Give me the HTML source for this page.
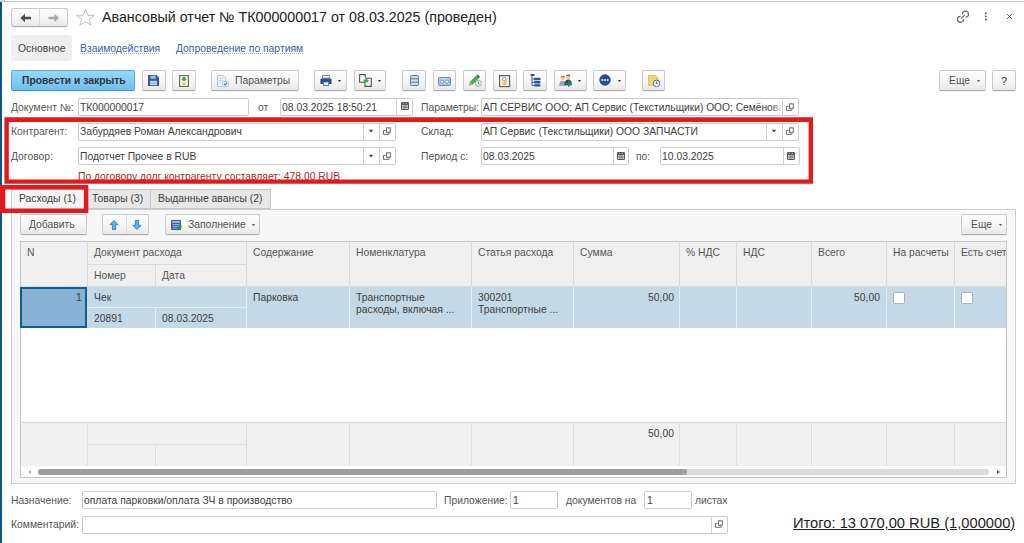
<!DOCTYPE html>
<html><head><meta charset="utf-8">
<style>
*{box-sizing:border-box;margin:0;padding:0}
html,body{width:1024px;height:543px;overflow:hidden;background:#fff;font-family:"Liberation Sans",sans-serif;position:relative}
.a{position:absolute}
.cb{position:absolute;border:1px solid #b0b0b0;border-radius:1.5px;background:#fff}
.t{position:absolute;white-space:nowrap;font-size:10.35px;line-height:12px;color:#3d3d3d}
.lb{color:#555}
.fld{position:absolute;border:1px solid #cbcbcb;border-radius:2px;background:#fff;height:18px}
.btn{position:absolute;border:1px solid #c9c9c9;border-bottom-color:#a9a9a9;border-radius:2px;background:linear-gradient(#fefefe,#f6f6f6 50%,#e9e9e9);box-shadow:0 1px 0 rgba(0,0,0,.05);height:21px}
.vs{position:absolute;top:0;bottom:0;width:1px;background:#d2d2d2}
.dd{position:absolute;width:0;height:0;border-left:3px solid transparent;border-right:3px solid transparent;border-top:3px solid #444}
.lnk{color:#3a5bb5;text-decoration:underline dotted;text-decoration-color:#9fb0dc}
.red{position:absolute;border:4px solid #e31a1c}
svg{position:absolute;overflow:visible}
</style></head><body>
<!-- top line and left bar -->
<div class="a" style="left:0;top:1px;width:1024px;height:1px;background:#c3c3c3"></div>
<div class="a" style="left:0;top:0;width:4px;height:1px;background:#e6e6e6"></div>
<div class="a" style="left:4px;top:0;width:1px;height:2px;background:#b0b0b0"></div>
<div class="a" style="left:0;top:2px;width:2px;height:541px;background:#0b5589"></div>

<!-- nav buttons -->
<div class="btn" style="left:11px;top:8px;width:57px;height:19px;border-radius:3px"></div>
<div class="a" style="left:39px;top:9px;width:1px;height:17px;background:#d8d8d8"></div>
<svg style="left:20px;top:13px" width="12" height="10" viewBox="0 0 12 10"><path d="M0.5 5 L5 0.8 L5 3.7 L11 3.7 L11 6.3 L5 6.3 L5 9.2 Z" fill="#4a4a4a"/></svg>
<svg style="left:48px;top:13px" width="12" height="10" viewBox="0 0 12 10"><path d="M11 5 L6.5 0.8 L6.5 3.7 L0.5 3.7 L0.5 6.3 L6.5 6.3 L6.5 9.2 Z" fill="#a8a8a8"/></svg>
<!-- star -->
<svg style="left:76px;top:8px" width="20" height="18" viewBox="0 0 20 18"><path d="M9.4 1 L11.6 7.3 L18.3 7.4 L13 11.5 L15 17.2 L9.4 13.7 L3.8 17.2 L5.8 11.5 L0.5 7.4 L7.2 7.3 Z" fill="none" stroke="#b9c1c9" stroke-width="1"/></svg>
<!-- title -->
<div class="t" style="left:102px;top:9px;font-size:14.27px;line-height:16px;color:#222">Авансовый отчет № ТК000000017 от 08.03.2025 (проведен)</div>
<!-- right icons -->
<svg style="left:952px;top:6px" width="20" height="20" viewBox="0 0 20 20"><g fill="none" stroke="#6a6a6a" stroke-width="1.2" stroke-linecap="round"><path d="M13.76 11.19 A3 3 0 1 0 10.51 7.94"/><path d="M11.39 13.56 A3 3 0 1 1 8.14 10.31"/><path d="M9.4 12.3 L12.5 9.2"/></g></svg>
<svg style="left:980px;top:8px" width="12" height="16" viewBox="0 0 12 16"><g fill="#585858"><circle cx="5.8" cy="5.2" r="0.95"/><circle cx="5.8" cy="8.4" r="0.95"/><circle cx="5.8" cy="11.5" r="0.95"/></g></svg>
<svg style="left:1006px;top:13px" width="7" height="7" viewBox="0 0 7 7"><path d="M0.9 0.9 L6.1 6.1 M6.1 0.9 L0.9 6.1" stroke="#666" stroke-width="1"/></svg>

<!-- section tabs -->
<div class="a" style="left:11px;top:35px;width:61px;height:26px;background:#efefef;border-radius:3px"></div>
<div class="t" style="left:18px;top:43px">Основное</div>
<div class="t lnk" style="left:80px;top:43px">Взаимодействия</div>
<div class="t lnk" style="left:176px;top:43px">Допроведение по партиям</div>

<!-- toolbar -->
<div class="btn" style="left:11px;top:70px;width:124px;border-color:#5aa6da;border-bottom-color:#4a90c0;background:linear-gradient(#98d8fd,#6cc0f1)"></div>
<div class="t" style="left:22px;top:75px;font-weight:bold;color:#333">Провести и закрыть</div>
<div class="btn" style="left:142px;top:70px;width:24px"></div>
<svg style="left:148px;top:75px" width="11" height="11" viewBox="0 0 11 11"><path d="M0 0 H8.5 L11 2.5 V11 H0 Z" fill="#2f56a0"/><rect x="2.3" y="0.6" width="5.5" height="3.2" fill="#9fb6dc"/><rect x="2" y="5.8" width="7" height="4.4" fill="#c9d3e2"/><rect x="2" y="7.6" width="7" height="0.8" fill="#8aa0c0"/></svg>
<div class="btn" style="left:172px;top:70px;width:24px"></div>
<svg style="left:179px;top:75px" width="10" height="12" viewBox="0 0 10 12"><rect x="0.6" y="0.6" width="8.8" height="10.8" fill="#fff" stroke="#6a6a6a" stroke-width="1.2"/><path d="M3.5 2 H6.5 V4 H8 L5 6.5 L2 4 H3.5 Z" fill="#2bb24c"/><circle cx="5" cy="8.6" r="1.7" fill="#f5c518"/></svg>
<div class="btn" style="left:211px;top:70px;width:88px"></div>
<svg style="left:217px;top:75px" width="12" height="12" viewBox="0 0 12 12"><path d="M0.5 0.5 H6 L8.5 3 V11.5 H0.5 Z" fill="#eef3f8" stroke="#b3c7da" stroke-width="1"/><path d="M2 3.5 H6 M2 5.5 H6 M2 7.5 H4" stroke="#b5c6d8" stroke-width="0.8"/><rect x="5.5" y="6.5" width="6" height="5" rx="1" fill="#f4f8fc" stroke="#a9c6e2" stroke-width="1"/><path d="M7 9 L8.2 10 L10.2 7.8" stroke="#3a78b8" stroke-width="1.1" fill="none"/></svg>
<div class="t" style="left:235px;top:75px;color:#505050">Параметры</div>
<div class="btn" style="left:314px;top:70px;width:33px"></div>
<svg style="left:320px;top:75px" width="12" height="11" viewBox="0 0 12 11"><rect x="2.5" y="0.5" width="6.8" height="2.6" fill="#fff" stroke="#777" stroke-width="0.9"/><path d="M1.2 3.6 H10.8 Q11.6 3.6 11.6 4.6 V9 H9 V10.8 H3 V9 H0.4 V4.6 Q0.4 3.6 1.2 3.6 Z" fill="#2a4f9a"/><rect x="3.6" y="7.3" width="4.8" height="2.6" fill="#fff"/></svg>
<svg style="left:337px;top:79px" width="5" height="3" viewBox="0 0 5 3"><path d="M0.9 0.9 H4.1 L2.5 2.9 Z" fill="#333"/></svg>
<div class="btn" style="left:354px;top:70px;width:32px"></div>
<svg style="left:359px;top:74px" width="14" height="13" viewBox="0 0 14 13"><path d="M6.5 8.2 H0.6 V0.6 H6.2 V3.8" fill="none" stroke="#555" stroke-width="1.1"/><path d="M6 4.3 H12.3 V12.4 H6 V8.6" fill="none" stroke="#555" stroke-width="1.1"/><path d="M4.6 5.6 H7.2 V4.3 L10 6.7 L7.2 9.1 V7.8 H4.6 Z" fill="#22b24a"/></svg>
<svg style="left:377px;top:79px" width="5" height="3" viewBox="0 0 5 3"><path d="M0.9 0.9 H4.1 L2.5 2.9 Z" fill="#333"/></svg>
<div class="btn" style="left:402px;top:70px;width:24px"></div>
<svg style="left:410px;top:75px" width="9" height="11" viewBox="0 0 9 11"><rect x="0.5" y="0.5" width="8" height="10" rx="1" fill="#b9cde0" stroke="#5f7f9f" stroke-width="1"/><path d="M0.5 3.8 H8.5 M0.5 7.2 H8.5" stroke="#5f7f9f" stroke-width="0.9"/><path d="M1.5 2 H7.5 M1.5 5.4 H7.5 M1.5 8.8 H7.5" stroke="#e4edf5" stroke-width="0.9"/></svg>
<div class="btn" style="left:433px;top:70px;width:23px"></div>
<svg style="left:438px;top:77px" width="13" height="9" viewBox="0 0 13 9"><rect x="0.5" y="0.5" width="12" height="8" rx="1" fill="#a9c8e6" stroke="#6b8aa8" stroke-width="1"/><circle cx="4" cy="4.6" r="1.6" fill="#fff" stroke="#6b8aa8" stroke-width="0.8"/><circle cx="9" cy="4.6" r="1.6" fill="#fff" stroke="#6b8aa8" stroke-width="0.8"/><path d="M3 1.8 H10" stroke="#d8e6f2" stroke-width="0.8"/></svg>
<div class="btn" style="left:463px;top:70px;width:23px"></div>
<svg style="left:468px;top:74px" width="14" height="13" viewBox="0 0 14 13"><path d="M1.2 11.2 L2.2 8 L8.5 1.7 L10.8 4 L4.5 10.3 Z" fill="#3fb548" stroke="#2a7a2f" stroke-width="0.5"/><path d="M8.5 1.7 L9.7 0.5 L12 2.8 L10.8 4 Z" fill="#555"/><path d="M1.2 11.2 L2.2 8 L4.5 10.3 Z" fill="#e0b070"/><circle cx="10.3" cy="9.3" r="3" fill="#fff" stroke="#7c98b4" stroke-width="0.9"/><path d="M10.2 7.5 V9.4 L11.4 10.3" stroke="#333" stroke-width="0.8" fill="none"/></svg>
<div class="btn" style="left:493px;top:70px;width:24px"></div>
<svg style="left:499px;top:75px" width="12" height="12" viewBox="0 0 12 12"><rect x="0.6" y="0.6" width="10" height="11" fill="#f4f4f4" stroke="#666" stroke-width="1.2"/><circle cx="5.2" cy="4" r="1.7" fill="none" stroke="#888" stroke-width="0.8"/><path d="M6.4 5.2 L8 6.6" stroke="#888" stroke-width="0.8"/><circle cx="5.6" cy="8.2" r="2" fill="#f7c81e"/></svg>
<div class="btn" style="left:523px;top:70px;width:24px"></div>
<svg style="left:530px;top:74px" width="11" height="13" viewBox="0 0 11 13"><rect x="0.5" y="0" width="4" height="2" rx="0.6" fill="#2a53a0"/><path d="M2 2 V11.5 M2 5 H4 M2 8.2 H4 M2 11.4 H4" stroke="#2a53a0" stroke-width="0.9"/><rect x="4" y="3.8" width="6.5" height="2.4" rx="0.8" fill="#2a53a0"/><rect x="4" y="7" width="6.5" height="2.4" rx="0.8" fill="#2a53a0"/><rect x="4" y="10.2" width="6.5" height="2.4" rx="0.8" fill="#2a53a0"/></svg>
<div class="btn" style="left:554px;top:70px;width:33px"></div>
<svg style="left:559px;top:74px" width="14" height="13" viewBox="0 0 14 13"><path d="M0.2 11.8 Q0.2 6.8 3.9 6.8 Q7.4 6.8 7.4 11.8 Z" fill="#7ea3c4"/><rect x="3.5" y="7.2" width="0.9" height="4.4" fill="#e2a0a0"/><circle cx="3.9" cy="4" r="2.1" fill="#eec47c"/><path d="M1.8 3.6 Q2 1.6 3.9 1.7 Q5.8 1.6 6 3.6 Q5 2.6 3.9 2.7 Q2.8 2.6 1.8 3.6 Z" fill="#8a5a20"/><path d="M5.6 11.2 Q5.6 5.6 9.2 5.6 Q12.8 5.6 12.8 11.2 Z" fill="#2e3f78"/><circle cx="9.2" cy="2.7" r="2.1" fill="#eec47c"/><path d="M7.1 2.4 Q7.2 0.3 9.2 0.4 Q11.2 0.3 11.3 2.4 Q10.3 1.4 9.2 1.5 Q8.1 1.4 7.1 2.4 Z" fill="#34365c"/><path d="M6.8 9 H12.8 V10.6 H6.8 Z M9 6.8 H10.6 V12.8 H9 Z" fill="#0f9a48"/></svg>
<svg style="left:577px;top:79px" width="5" height="3" viewBox="0 0 5 3"><path d="M0.9 0.9 H4.1 L2.5 2.9 Z" fill="#333"/></svg>
<div class="btn" style="left:593px;top:70px;width:33px"></div>
<svg style="left:599px;top:74px" width="12" height="12" viewBox="0 0 12 12"><circle cx="6" cy="6" r="5.7" fill="#2a4e96"/><circle cx="3.3" cy="6" r="0.95" fill="#fff"/><circle cx="6" cy="6" r="0.95" fill="#fff"/><circle cx="8.7" cy="6" r="0.95" fill="#fff"/></svg>
<svg style="left:617px;top:79px" width="5" height="3" viewBox="0 0 5 3"><path d="M0.9 0.9 H4.1 L2.5 2.9 Z" fill="#333"/></svg>
<div class="btn" style="left:642px;top:70px;width:23px"></div>
<svg style="left:648px;top:75px" width="13" height="12" viewBox="0 0 13 12"><path d="M0.5 0.5 H7.5 L10 3 V10.5 H0.5 Z" fill="#f1d37a" stroke="#d9b54e" stroke-width="0.8"/><circle cx="8.5" cy="8.4" r="3.3" fill="#fff" stroke="#3f6fb0" stroke-width="1"/><path d="M8.5 6.6 V8.6 H10" stroke="#d63030" stroke-width="0.9" fill="none"/></svg>
<div class="btn" style="left:939px;top:70px;width:47px"></div>
<div class="t" style="left:949px;top:75px;color:#505050">Еще</div>
<svg style="left:976px;top:79px" width="5" height="3" viewBox="0 0 5 3"><path d="M0.9 0.9 H4.1 L2.5 2.9 Z" fill="#555"/></svg>
<div class="btn" style="left:992px;top:70px;width:24px"></div>
<div class="t" style="left:1001px;top:75px;color:#333;font-size:11px">?</div>

<!-- header fields -->
<div class="t lb" style="left:11px;top:102px">Документ №:</div>
<div class="fld" style="left:78px;top:98px;width:171px"></div>
<div class="t" style="left:80px;top:102px">ТК000000017</div>
<div class="t lb" style="left:258px;top:102px">от</div>
<div class="fld" style="left:280px;top:98px;width:133px"><div class="vs" style="left:115px"></div></div>
<div class="t" style="left:282px;top:102px">08.03.2025 18:50:21</div>
<svg style="left:401px;top:102px" width="8" height="8" viewBox="0 0 8 8"><rect x="0" y="0" width="8" height="7.9" rx="1.2" fill="#595959"/><circle cx="2.6" cy="1.3" r="0.65" fill="#bbb"/><circle cx="5.4" cy="1.3" r="0.65" fill="#bbb"/><rect x="1" y="3" width="6" height="4" fill="#d6d6d6"/><path d="M3 3 V7 M5 3 V7 M1 5 H7" stroke="#595959" stroke-width="0.7"/></svg>
<div class="t lb" style="left:421px;top:102px">Параметры:</div>
<div class="fld" style="left:481px;top:98px;width:318px"><div class="vs" style="left:300px"></div></div>
<div class="a" style="left:482px;top:99px;width:300px;height:16px;overflow:hidden"><div class="t" style="left:1px;top:3px;font-size:10.22px">АП СЕРВИС ООО; АП Сервис (Текстильщики) ООО; Семёнова</div><div class="a" style="left:290px;top:0;width:10px;height:16px;background:linear-gradient(to right,rgba(255,255,255,0),#fff)"></div></div>
<svg style="left:785px;top:103px" width="10" height="9" viewBox="0 0 10 9"><path d="M3.6 3.4 H1.45 V7.3 H6.9 V5.8" fill="none" stroke="#666" stroke-width="1"/><rect x="4.55" y="0.85" width="3.75" height="4.4" fill="none" stroke="#666" stroke-width="1"/></svg>

<div class="t lb" style="left:11px;top:126px">Контрагент:</div>
<div class="fld" style="left:78px;top:123px;width:318px"><div class="vs" style="left:284px"></div><div class="vs" style="left:300px"></div></div>
<div class="t" style="left:80px;top:126px">Забурдяев Роман Александрович</div>
<svg style="left:368px;top:129px" width="6" height="4" viewBox="0 0 6 4"><path d="M0.8 0.8 H5.2 L3 3.5 Z" fill="#444"/></svg>
<svg style="left:382px;top:127px" width="10" height="9" viewBox="0 0 10 9"><path d="M3.6 3.4 H1.45 V7.3 H6.9 V5.8" fill="none" stroke="#666" stroke-width="1"/><rect x="4.55" y="0.85" width="3.75" height="4.4" fill="none" stroke="#666" stroke-width="1"/></svg>
<div class="t lb" style="left:421px;top:126px">Склад:</div>
<div class="fld" style="left:481px;top:123px;width:318px"><div class="vs" style="left:284px"></div><div class="vs" style="left:300px"></div></div>
<div class="t" style="left:483px;top:126px">АП Сервис (Текстильщики) ООО ЗАПЧАСТИ</div>
<svg style="left:771px;top:129px" width="6" height="4" viewBox="0 0 6 4"><path d="M0.8 0.8 H5.2 L3 3.5 Z" fill="#444"/></svg>
<svg style="left:785px;top:127px" width="10" height="9" viewBox="0 0 10 9"><path d="M3.6 3.4 H1.45 V7.3 H6.9 V5.8" fill="none" stroke="#666" stroke-width="1"/><rect x="4.55" y="0.85" width="3.75" height="4.4" fill="none" stroke="#666" stroke-width="1"/></svg>

<div class="t lb" style="left:11px;top:151px">Договор:</div>
<div class="fld" style="left:78px;top:147px;width:318px"><div class="vs" style="left:284px"></div><div class="vs" style="left:300px"></div></div>
<div class="t" style="left:80px;top:151px">Подотчет Прочее в RUB</div>
<svg style="left:368px;top:154px" width="6" height="4" viewBox="0 0 6 4"><path d="M0.8 0.8 H5.2 L3 3.5 Z" fill="#444"/></svg>
<svg style="left:382px;top:152px" width="10" height="9" viewBox="0 0 10 9"><path d="M3.6 3.4 H1.45 V7.3 H6.9 V5.8" fill="none" stroke="#666" stroke-width="1"/><rect x="4.55" y="0.85" width="3.75" height="4.4" fill="none" stroke="#666" stroke-width="1"/></svg>
<div class="t lb" style="left:421px;top:151px">Период с:</div>
<div class="fld" style="left:481px;top:147px;width:148px"><div class="vs" style="left:131px"></div></div>
<div class="t" style="left:483px;top:151px">08.03.2025</div>
<svg style="left:617px;top:152px" width="8" height="8" viewBox="0 0 8 8"><rect x="0" y="0" width="8" height="7.9" rx="1.2" fill="#595959"/><circle cx="2.6" cy="1.3" r="0.65" fill="#bbb"/><circle cx="5.4" cy="1.3" r="0.65" fill="#bbb"/><rect x="1" y="3" width="6" height="4" fill="#d6d6d6"/><path d="M3 3 V7 M5 3 V7 M1 5 H7" stroke="#595959" stroke-width="0.7"/></svg>
<div class="t lb" style="left:636px;top:151px">по:</div>
<div class="fld" style="left:660px;top:147px;width:140px"><div class="vs" style="left:122px"></div></div>
<div class="t" style="left:662px;top:151px">10.03.2025</div>
<svg style="left:787px;top:152px" width="8" height="8" viewBox="0 0 8 8"><rect x="0" y="0" width="8" height="7.9" rx="1.2" fill="#595959"/><circle cx="2.6" cy="1.3" r="0.65" fill="#bbb"/><circle cx="5.4" cy="1.3" r="0.65" fill="#bbb"/><rect x="1" y="3" width="6" height="4" fill="#d6d6d6"/><path d="M3 3 V7 M5 3 V7 M1 5 H7" stroke="#595959" stroke-width="0.7"/></svg>
<div class="t" style="left:78px;top:171px;color:#a52a2a;text-decoration:underline">По договору долг контрагенту составляет: 478,00 RUB</div>

<svg style="left:0;top:0" width="1024" height="543"><path fill-rule="evenodd" fill="#e31a1c" d="M4.4 117.2 H813 V183.7 H4.4 Z M8.8 121.9 V179.5 H808.6 V121.9 Z"/></svg>

<!-- tabs panel -->
<div class="a" style="left:11px;top:209px;width:1005px;height:275px;border:1px solid #cdcdcd;background:#f7f7f7"></div>
<div class="a" style="left:11px;top:189px;width:75px;height:21px;border:1px solid #cdcdcd;border-bottom:none;background:#f4f4f4"></div>
<div class="t" style="left:19px;top:193px">Расходы (1)</div>
<div class="a" style="left:85px;top:189px;width:66px;height:20px;border:1px solid #c6c6c6;background:#e7e7e7"></div>
<div class="t" style="left:92px;top:193px">Товары (3)</div>
<div class="a" style="left:150px;top:189px;width:121px;height:20px;border:1px solid #c6c6c6;background:#e7e7e7"></div>
<div class="t" style="left:158px;top:193px">Выданные авансы (2)</div>
<svg style="left:0;top:0" width="1024" height="543"><path fill-rule="evenodd" fill="#e31a1c" d="M0 184.9 H88.3 V213 H0 Z M5.3 189.5 V208.5 H83.9 V189.5 Z"/></svg>

<!-- tab toolbar -->
<div class="btn" style="left:20px;top:214px;width:67px"></div>
<div class="t" style="left:29px;top:219px;color:#505050">Добавить</div>
<div class="btn" style="left:102px;top:214px;width:47px"><div class="vs" style="left:23px;background:#dcdcdc"></div></div>
<svg style="left:109px;top:220px" width="10" height="10" viewBox="0 0 10 10"><path d="M5 0.5 L9.2 4.6 H6.6 V9.5 H3.4 V4.6 H0.8 Z" fill="#4db8f2" stroke="#1f78c0" stroke-width="0.8" stroke-linejoin="round"/></svg>
<svg style="left:132px;top:220px" width="10" height="10" viewBox="0 0 10 10"><path d="M5 9.5 L9.2 5.4 H6.6 V0.5 H3.4 V5.4 H0.8 Z" fill="#4db8f2" stroke="#1f78c0" stroke-width="0.8" stroke-linejoin="round"/></svg>
<div class="btn" style="left:165px;top:214px;width:95px"></div>
<svg style="left:171px;top:220px" width="12" height="11" viewBox="0 0 12 11"><rect x="0" y="0" width="10" height="10" rx="0.8" fill="#3d5aa8"/><rect x="1.2" y="1.2" width="7.6" height="1.6" fill="#b8c6e6"/><path d="M1.5 4.6 H8.5 M1.5 6.4 H8.5 M1.5 8.2 H6" stroke="#c8d3ec" stroke-width="0.7"/><path d="M5.6 10.6 L6.3 8.6 L9.6 5.3 L11 6.7 L7.7 10 Z" fill="#1f9a2f"/><path d="M9.6 5.3 L10.4 4.5 L11.8 5.9 L11 6.7 Z" fill="#f3d34a"/></svg>
<div class="t" style="left:188px;top:219px;color:#505050">Заполнение</div>
<svg style="left:251px;top:223px" width="5" height="3" viewBox="0 0 5 3"><path d="M0.9 0.9 H4.1 L2.5 2.9 Z" fill="#555"/></svg>
<div class="btn" style="left:961px;top:214px;width:46px"></div>
<div class="t" style="left:971px;top:219px;color:#505050">Еще</div>
<svg style="left:998px;top:223px" width="5" height="3" viewBox="0 0 5 3"><path d="M0.9 0.9 H4.1 L2.5 2.9 Z" fill="#555"/></svg>

<!-- table -->
<div class="a" style="left:20px;top:241px;width:987px;height:237px;border:1px solid #c6c6c6;background:#fff"></div>
<!-- header -->
<div class="a" style="left:21px;top:242px;width:985px;height:45px;background:#f0f0f0"></div>
<div class="a" style="left:21px;top:286px;width:985px;height:1px;background:#dadada"></div>
<div class="a" style="left:87px;top:242px;width:1px;height:45px;background:#dadada"></div>
<div class="a" style="left:246px;top:242px;width:1px;height:45px;background:#dadada"></div>
<div class="a" style="left:349px;top:242px;width:1px;height:45px;background:#dadada"></div>
<div class="a" style="left:471px;top:242px;width:1px;height:45px;background:#dadada"></div>
<div class="a" style="left:573px;top:242px;width:1px;height:45px;background:#dadada"></div>
<div class="a" style="left:679px;top:242px;width:1px;height:45px;background:#dadada"></div>
<div class="a" style="left:736px;top:242px;width:1px;height:45px;background:#dadada"></div>
<div class="a" style="left:811px;top:242px;width:1px;height:45px;background:#dadada"></div>
<div class="a" style="left:886px;top:242px;width:1px;height:45px;background:#dadada"></div>
<div class="a" style="left:954px;top:242px;width:1px;height:45px;background:#dadada"></div>
<div class="a" style="left:87px;top:264px;width:159px;height:1px;background:#dadada"></div>
<div class="a" style="left:155px;top:264px;width:1px;height:23px;background:#dadada"></div>
<div class="a" style="left:21px;top:242px;width:985px;height:45px;overflow:hidden">
<div class="t hc" style="left:6px;top:5px;color:#555">N</div>
<div class="t hc" style="left:73px;top:5px;color:#555">Документ расхода</div>
<div class="t hc" style="left:73px;top:28px;color:#555">Номер</div>
<div class="t hc" style="left:141px;top:28px;color:#555">Дата</div>
<div class="t hc" style="left:232px;top:5px;color:#555">Содержание</div>
<div class="t hc" style="left:335px;top:5px;color:#555">Номенклатура</div>
<div class="t hc" style="left:457px;top:5px;color:#555">Статья расхода</div>
<div class="t hc" style="left:559px;top:5px;color:#555">Сумма</div>
<div class="t hc" style="left:665px;top:5px;color:#555">% НДС</div>
<div class="t hc" style="left:722px;top:5px;color:#555">НДС</div>
<div class="t hc" style="left:797px;top:5px;color:#555">Всего</div>
<div class="t hc" style="left:872px;top:5px;color:#555">На расчеты</div>
<div class="t hc" style="left:940px;top:5px;color:#555">Есть счет</div>
</div>
<!-- row -->
<div class="a" style="left:21px;top:287px;width:985px;height:41px;background:#c3d9e8"></div>
<div class="a" style="left:246px;top:287px;width:1px;height:41px;background:#e4eef5"></div>
<div class="a" style="left:349px;top:287px;width:1px;height:41px;background:#e4eef5"></div>
<div class="a" style="left:471px;top:287px;width:1px;height:41px;background:#e4eef5"></div>
<div class="a" style="left:573px;top:287px;width:1px;height:41px;background:#e4eef5"></div>
<div class="a" style="left:679px;top:287px;width:1px;height:41px;background:#e4eef5"></div>
<div class="a" style="left:736px;top:287px;width:1px;height:41px;background:#e4eef5"></div>
<div class="a" style="left:811px;top:287px;width:1px;height:41px;background:#e4eef5"></div>
<div class="a" style="left:886px;top:287px;width:1px;height:41px;background:#e4eef5"></div>
<div class="a" style="left:954px;top:287px;width:1px;height:41px;background:#e4eef5"></div>
<div class="a" style="left:87px;top:307px;width:159px;height:1px;background:#e4eef5"></div>
<div class="a" style="left:155px;top:307px;width:1px;height:21px;background:#e4eef5"></div>
<div class="a" style="left:20px;top:287px;width:67px;height:41px;border:2px solid #145d93;background:#86b3d3"></div>
<div class="a" style="left:21px;top:287px;width:985px;height:41px;overflow:hidden">
<div class="t" style="left:55px;top:5px">1</div>
<div class="t" style="left:73px;top:5px">Чек</div>
<div class="t" style="left:73px;top:26px">20891</div>
<div class="t" style="left:141px;top:26px">08.03.2025</div>
<div class="t" style="left:232px;top:5px">Парковка</div>
<div class="t" style="left:335px;top:5px;line-height:12px">Транспортные<br>расходы, включая ...</div>
<div class="t" style="left:457px;top:5px;line-height:12px">300201<br>Транспортные ...</div>
<div class="t" style="left:627px;top:5px">50,00</div>
<div class="t" style="left:833px;top:5px">50,00</div>
<div class="cb" style="left:872px;top:5px;width:12px;height:12px"></div>
<div class="cb" style="left:940px;top:5px;width:12px;height:12px"></div>
</div>
<!-- footer -->
<div class="a" style="left:21px;top:422px;width:985px;height:44px;background:#f0f0f0;border-top:1px solid #d6d6d6"></div>
<div class="a" style="left:87px;top:423px;width:1px;height:43px;background:#dedede"></div>
<div class="a" style="left:246px;top:423px;width:1px;height:43px;background:#dedede"></div>
<div class="a" style="left:349px;top:423px;width:1px;height:43px;background:#dedede"></div>
<div class="a" style="left:471px;top:423px;width:1px;height:43px;background:#dedede"></div>
<div class="a" style="left:573px;top:423px;width:1px;height:43px;background:#dedede"></div>
<div class="a" style="left:679px;top:423px;width:1px;height:43px;background:#dedede"></div>
<div class="a" style="left:736px;top:423px;width:1px;height:43px;background:#dedede"></div>
<div class="a" style="left:811px;top:423px;width:1px;height:43px;background:#dedede"></div>
<div class="a" style="left:886px;top:423px;width:1px;height:43px;background:#dedede"></div>
<div class="a" style="left:954px;top:423px;width:1px;height:43px;background:#dedede"></div>
<div class="a" style="left:87px;top:444px;width:159px;height:1px;background:#dedede"></div>
<div class="a" style="left:155px;top:444px;width:1px;height:22px;background:#dedede"></div>
<div class="t" style="left:648px;top:428px">50,00</div>
<!-- scrollbar -->
<div class="a" style="left:38px;top:469px;width:951px;height:6px;border-radius:3px;background:#dcdcdc"></div>
<div class="a" style="left:38px;top:469px;width:649px;height:6px;border-radius:3px;background:#9d9d9d"></div>
<svg style="left:28px;top:470px" width="3" height="4" viewBox="0 0 3 4"><path d="M0 2 L3 0 V4 Z" fill="#b0b0b0"/></svg>
<svg style="left:997px;top:470px" width="3" height="4" viewBox="0 0 3 4"><path d="M3 2 L0 0 V4 Z" fill="#555"/></svg>

<!-- bottom fields -->
<div class="t lb" style="left:11px;top:495px">Назначение:</div>
<div class="fld" style="left:82px;top:491px;width:355px"></div>
<div class="t" style="left:84px;top:495px">оплата парковки/оплата ЗЧ в производство</div>
<div class="t lb" style="left:444px;top:495px">Приложение:</div>
<div class="fld" style="left:510px;top:491px;width:48px"></div>
<div class="t" style="left:513px;top:495px">1</div>
<div class="t lb" style="left:566px;top:495px">документов на</div>
<div class="fld" style="left:644px;top:491px;width:48px"></div>
<div class="t" style="left:647px;top:495px">1</div>
<div class="t lb" style="left:695px;top:495px">листах</div>
<div class="t lb" style="left:11px;top:519px">Комментарий:</div>
<div class="fld" style="left:82px;top:516px;width:646px"><div class="vs" style="left:628px"></div></div>
<svg style="left:714px;top:520px" width="10" height="9" viewBox="0 0 10 9"><path d="M3.6 3.4 H1.45 V7.3 H6.9 V5.8" fill="none" stroke="#666" stroke-width="1"/><rect x="4.55" y="0.85" width="3.75" height="4.4" fill="none" stroke="#666" stroke-width="1"/></svg>
<div class="t" style="left:793px;top:515px;font-size:14.7px;line-height:16px;color:#222;text-decoration:underline">Итого: 13 070,00 RUB (1,000000)</div>
</body></html>
